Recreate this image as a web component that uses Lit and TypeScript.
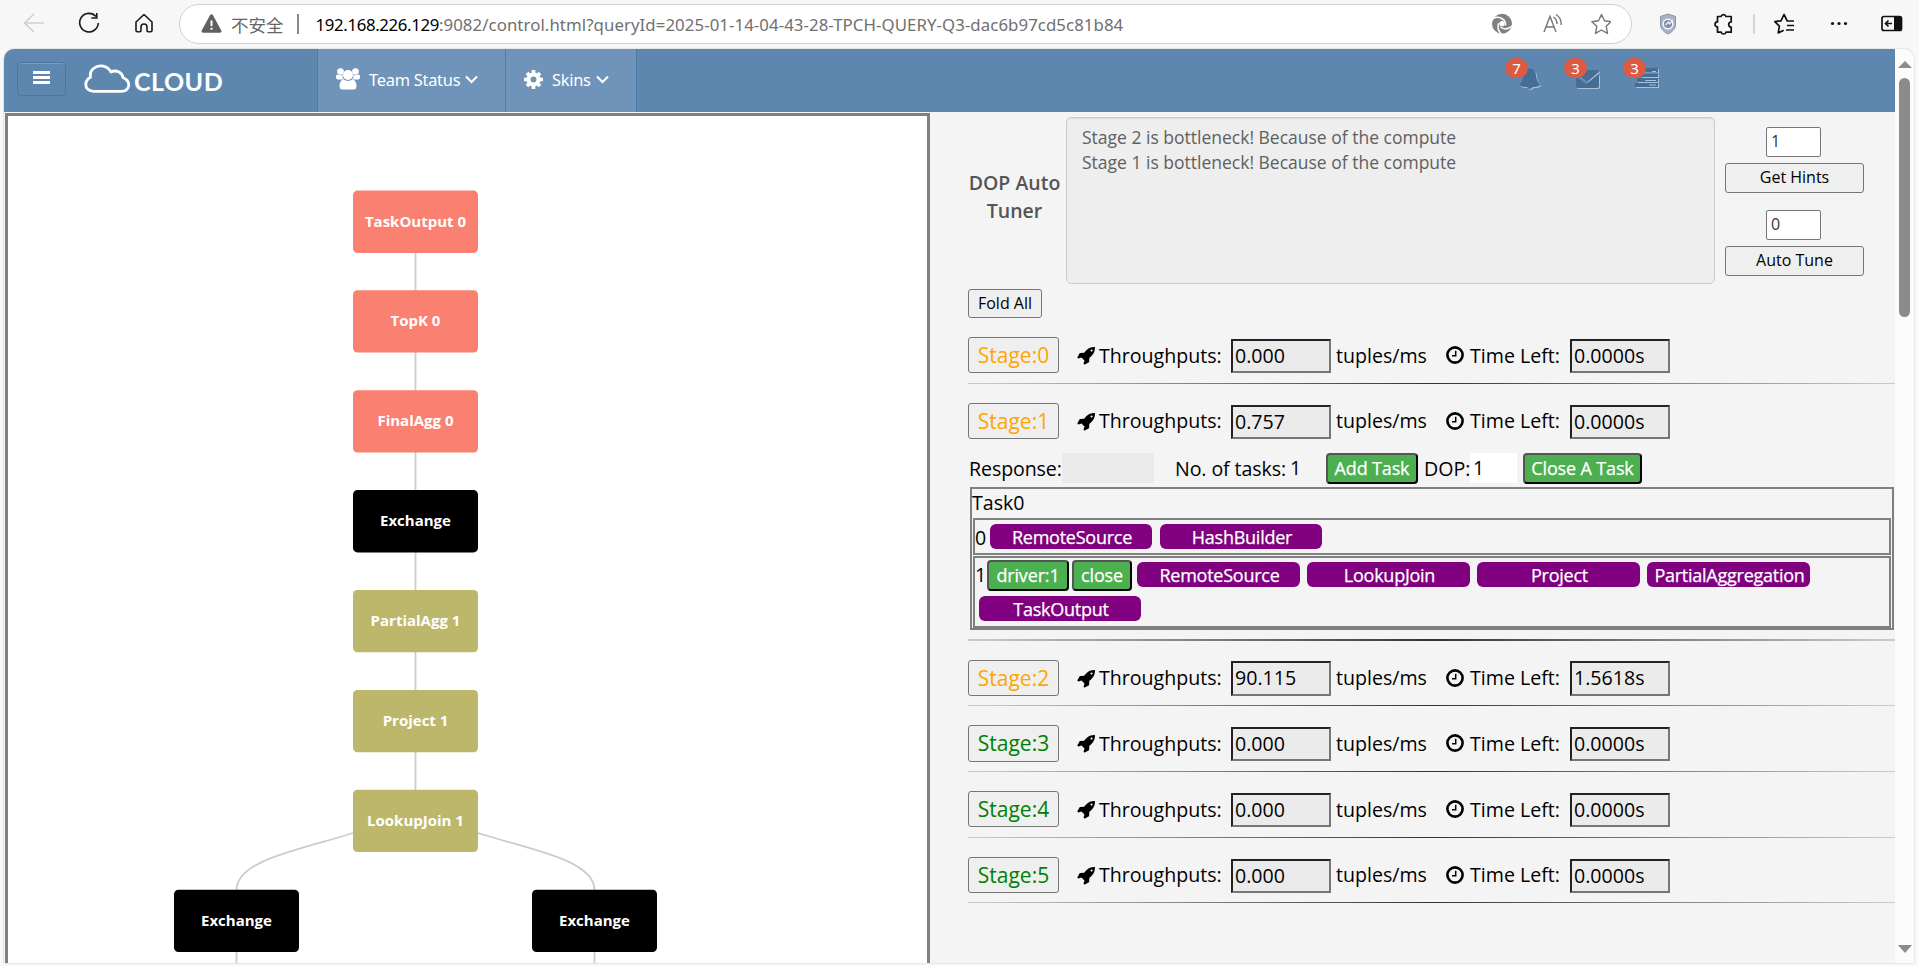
import { LitElement, html, svg, css } from "lit";
import { customElement, property } from "lit/decorators.js";
import { classMap } from "lit/directives/class-map.js";

const rocket = html`<svg class="rocket" viewBox="0 0 1664 1664" width="18" height="18"><path fill="#000" d="M1440 320q0-40-28-68t-68-28-68 28-28 68 28 68 68 28 68-28 28-68zm224-288q0 249-75.500 430.500t-253.500 360.500q-81 80-195 176l-20 379q-2 16-16 26l-384 224q-7 4-16 4-12 0-23-9l-64-64q-13-14-8-32l85-276-281-281-276 85q-3 1-9 1-14 0-23-9l-64-64q-17-19-5-39l224-384q10-14 26-16l379-20q96-114 176-195 188-187 358-258t431-71q14 0 24 9.500t10 22.500z"/></svg>`;
const clock = html`<svg class="clock" viewBox="0 0 18 18" width="18" height="18"><circle cx="9" cy="9" r="7.600" fill="none" stroke="#000" stroke-width="2.600"/><path d="M9.700 4.800V9.700H6" fill="none" stroke="#000" stroke-width="1.500"/></svg>`;

@customElement("browser-bar")
class BrowserBar extends LitElement {
  static styles = css`
    :host { display: flex; height: 49px; background: #f7f7f7; font-family: "Noto Sans", "Open Sans", sans-serif; align-items: flex-start; }
    svg { display: block; flex: none; }
    .nav { display: flex; width: 179px; height: 47px; flex: none; }
    .omni { box-sizing: border-box; width: 1453px; height: 40px; margin-top: 4px; border: 1px solid #d0d0d0; border-radius: 20px; background: #fff; display: flex; align-items: center; font-size: 17px; color: #707070; white-space: pre; flex: none; }
    .warn { margin: 0 0 1px 21px; }
    .unsafe { font-family: "Noto Sans CJK SC", sans-serif; font-size: 17.5px; font-weight: 400; margin-left: 9px; color: #666; width: 54px; }
    .sep { width: 1.5px; height: 20px; background: #8a8a8a; margin-left: 12px; }
    .url { margin-left: 17px; width: 1165px; font-size: 16.800px; letter-spacing: 0.08px; }
    .host { color: #000; letter-spacing: -0.35px; }
    .tools { width: 287px; height: 47px; }
  `;
  render() {
    return html`
      <svg class="nav" viewBox="0 0 179 47" fill="none" stroke-width="1.600">
        <path stroke="#cfcfcf" d="M44 23H25M34 14l-9.500 9 9.500 9"/>
        <path stroke="#1a1a1a" d="M96 16.500A9.300 9.300 0 1 0 98.300 23M96.800 13v5h-5.500"/>
        <path stroke="#1a1a1a" stroke-linejoin="round" d="M136 22l8-7.500 8 7.500v8.500a1.200 1.200 0 0 1-1.200 1.200h-2.600a1.200 1.200 0 0 1-1.200-1.200V27a3 3 0 0 0-6 0v3.500a1.200 1.200 0 0 1-1.200 1.200h-2.600a1.200 1.200 0 0 1-1.200-1.200z"/>
      </svg>
      <div class="omni">
        <svg class="warn" width="21" height="19" viewBox="0 0 21 19"><path fill="#606060" d="M9 1.200a1.700 1.700 0 0 1 3 0l8.300 15.300a1.600 1.600 0 0 1-1.400 2.300H2.100a1.600 1.600 0 0 1-1.400-2.300z"/><path stroke="#fff" stroke-width="2" d="M10.500 6.500v5.600M10.500 13.700v2"/></svg>
        <span class="unsafe">不安全</span><span class="sep"></span>
        <span class="url"><span class="host">192.168.226.129</span>:9082/control.html?queryId=2025-01-14-04-43-28-TPCH-QUERY-Q3-dac6b97cd5c81b84</span>
        <svg width="130" height="38" viewBox="1481 5 130 38" fill="none" stroke="#757575" stroke-width="1.400">
          <g stroke="none"><circle cx="1502" cy="23.700" r="10" fill="#808080"/><circle cx="1502" cy="23.700" r="2.600" fill="#fff"/></g>
          <path stroke="#fff" stroke-width="1.500" d="M1490.500 22q3.500-6 9-4.500 6.500 2 6 8M1498.700 23q-2.500 7 3.500 11.500M1500.500 27q5.500 4.500 12.500-1.500"/>
          <path d="M1544 32l6-15.500 6 15.500M1546 27h8M1553.500 17q3.500 2.500 3.500 7M1556 14.500q5.500 3.500 5.200 10.500"/>
          <path stroke-linejoin="round" d="M1601.500 14.500l3 6.300 6.600.9-4.900 4.600 1.300 7.100-6-3.400-6 3.400 1.300-7.100-4.900-4.600 6.600-.9z"/>
        </svg>
      </div>
      <svg class="tools" viewBox="1632 0 287 47" fill="none" stroke="#111" stroke-width="1.700">
        <path fill="#a9b3c6" stroke="#8793ab" stroke-width="1" d="M1668 14l7.500 2.500v9q-1 5.500-7.500 8.500-6.500-3-7.500-8.500v-9z"/>
        <circle cx="1668" cy="24" r="4.800" stroke="#f2f5fa" stroke-width="1.500" fill="#7f8ca8"/><path stroke="#f2f5fa" stroke-width="1.200" d="M1665.500 25l3-3 1 2 3.500-4"/>
        <path stroke-linejoin="round" d="M1717.500 16.500h3.500a2.600 2.600 0 0 1 5 0h5.200v5.500a2.500 2.500 0 1 0 0 5v5.200h-5.200a2.500 2.500 0 0 1-4.800 0h-3.700v-5.300a2.500 2.500 0 1 1 0-5z"/>
        <path stroke="#c8c8c8" stroke-width="1.500" d="M1754 14v20"/>
        <path stroke-linejoin="round" d="M1787 20.500l-3-6-3 6.300-6.200.9 4.600 4.500-1.200 6.700 5.500-2.700M1786.500 21h7.500M1787 25.500h7M1786 30h8"/>
        <g fill="#111" stroke="none"><circle cx="1832.500" cy="23.500" r="1.600"/><circle cx="1839" cy="23.500" r="1.600"/><circle cx="1845.500" cy="23.500" r="1.600"/>
        <path d="M1894 16h5.500q2.500 0 2.500 2.500v10q0 2.500-2.500 2.500h-5.500z"/></g>
        <rect x="1882" y="16.500" width="19.500" height="14" rx="2"/><path d="M1892 23.500h-6.500M1888.500 20.500l-3 3 3 3"/>
      </svg>`;
  }
}

@customElement("site-header")
class SiteHeader extends LitElement {
  static styles = css`
    :host { display: flex; height: 63px; background: #5e87b0; color: #fff; font-family: "Noto Sans", sans-serif; flex: none; }
    .burger { box-sizing: border-box; width: 49px; height: 34px; margin: 13px 0 0 13px; border: 1px solid #4d769f; border-radius: 4px; box-shadow: inset 0 1px 0 #789bbf; display: flex; flex-direction: column; align-items: center; padding-top: 8px; gap: 2px; }
    .burger i { width: 17px; height: 3px; background: #fff; }
    .logo { display: flex; width: 251px; }
    .cloud { margin: 15px 0 0 18px; flex: none; }
    .name { font: 700 25px/1 Lato, sans-serif; margin: 20px 0 0 3px; letter-spacing: 0.5px; }
    .tab { box-sizing: border-box; background: #7094b9; border-left: 1px solid #4f7ba7; display: flex; align-items: center; font-size: 16.400px; white-space: nowrap; }
    .team { width: 188px; padding: 0 0 3px 18px; }
    .skins { width: 132px; padding: 0 0 3px 18px; border-right: 1px solid #4f7ba7; }
    .tab span { margin-left: 9px; letter-spacing: -0.25px; padding-top: 1px; }
    .chev { margin-left: 5px; }
    .alerts { display: flex; margin-left: 868px; padding-top: 11px; }
    .alert { width: 59px; height: 44px; position: relative; }
    .alert svg { position: absolute; left: 12px; top: 7px; overflow: visible; filter: drop-shadow(1px 1px 0 #a9c3dc); }
    .alert:first-child svg { left: 14px; }
    .badge { position: absolute; left: 0; top: -2px; width: 23px; height: 20px; border-radius: 10px; background: #dd5a43; font-size: 15px; line-height: 21px; text-align: center; }
  `;
  render() {
    const chev = html`<svg class="chev" width="13" height="9" viewBox="0 0 13 9"><path d="M1 1.500l5.500 5.500 5.500-5.500" fill="none" stroke="#fff" stroke-width="2"/></svg>`;
    const alerts: [string, unknown][] = [
      ["7", svg`<path fill="#466d94" d="M0 17q4-4 4.500-10t6-6.500q6 .5 6.500 6.500t4 10q-2 2-7 2-3.500 4-6 0-6 0-8-2z"/>`],
      ["3", svg`<path fill="#466d94" d="M0 4q0-2 2-2h19q2 0 2 2l-12 10-11-9z"/><path fill="#466d94" d="M0 8l10 8 13-10v12q0 2-2 2h-19q-2 0-2-2z"/>`],
      ["3", svg`<path fill="#466d94" d="M8 0h15v4.500h-15zM6 5.500h17v3.500h-17zM2 10h21v4h-21zM0 15h23v4h-23z"/><path stroke="#a9c3dc" d="M17 3.500h4M10 12.500h11M14 17h7"/>`],
    ];
    return html`
      <div class="burger"><i></i><i></i><i></i></div>
      <div class="logo">
        <svg class="cloud" width="47" height="30" viewBox="0 0 47 30"><path fill="none" stroke="#fff" stroke-width="2.800" stroke-linejoin="round" d="M9.500 27.300Q1.800 26.500 1.800 20.500 2 15.500 6.500 13.300 5.500 7.500 9.500 4.500A11.500 11.500 0 0 1 27 8Q31 6 35 8 38.500 10 39 13.500 45.500 16.500 44.600 22 43.500 27.300 37.500 27.300Z"/></svg>
        <span class="name">CLOUD</span>
      </div>
      <div class="tab team">
        <svg width="24" height="22" viewBox="0 0 24 22" fill="#fff"><circle cx="4.500" cy="3.500" r="3.300"/><circle cx="19.500" cy="3.500" r="3.300"/><circle cx="12" cy="7" r="5"/><path d="M0 8q0-1.500 1.500-1.500 3.500 1.500 5 0Q6 10 8 11.500H2Q0 11.500 0 9.500zM24 8q0-1.500-1.500-1.500-3.500 1.500-5 0Q18 10 16 11.500h6q2 0 2-2zM3.500 18q0-5.500 4-6.500 4.500 2.800 9 0 4 1 4 6.500 0 3.500-3 3.500h-11q-3 0-3-3.500z"/></svg>
        <span>Team Status</span>${chev}
      </div>
      <div class="tab skins">
        <svg width="19" height="19" viewBox="0 -128 1536 1536" fill="none"><circle cx="768" cy="640" r="405" stroke="#fff" stroke-width="330"/><path stroke="#fff" stroke-width="300" d="M768 200V-128M768 1080V1408M328 640H0M1208 640H1536M457 329L240 112M1079 951L1296 1168M457 951L240 1168M1079 329L1296 112"/></svg>
        <span>Skins</span>${chev}
      </div>
      <div class="alerts">
        ${alerts.map(([n, icon]) => html`<div class="alert"><svg width="24" height="22" viewBox="0 -1 24 22">${icon}</svg><div class="badge">${n}</div></div>`)}
      </div>`;
  }
}

@customElement("plan-graph")
class PlanGraph extends LitElement {
  static styles = css`
    :host { display: block; box-sizing: border-box; width: 925px; height: 850px; margin: 1px 0 0 1px; border: 3px solid #808080; border-bottom: 0; background: #fff; overflow: hidden; }
    svg { display: block; }
    .label { font: 700 15px "Open Sans", sans-serif; fill: #fff; text-anchor: middle; }
    .edge { fill: none; stroke: #ccc; stroke-width: 1.800px; }
  `;
  render() {
    const S = "#fa8072", K = "#bdb76b", B = "#000";
    const nodes: [string, number, number, string][] = [
      ["TaskOutput 0", 415.5, 190.6, S], ["TopK 0", 415.5, 290.300, S], ["FinalAgg 0", 415.5, 390.200, S],
      ["Exchange", 415.5, 490.100, B], ["PartialAgg 1", 415.5, 590, K], ["Project 1", 415.5, 689.900, K],
      ["LookupJoin 1", 415.5, 789.800, K], ["Exchange", 236.5, 889.700, B], ["Exchange", 594.5, 889.700, B],
    ];
    return html`<svg width="919" height="847" viewBox="8 116 919 847">
      <path class="edge" d="M415.500 220V800M236.500 940V970M594.500 940V970M353 833C300 850 236.500 860 236.500 890M478 833C531 850 594.500 860 594.500 890"/>
      ${nodes.map(([t, x, y, c]) => svg`<rect x=${x - 62.5} y=${y} width="125" height="62.300" rx="4.500" fill=${c}/><text class="label" x=${x} y=${y + 36.1}>${t}</text>`)}
    </svg>`;
  }
}

@customElement("stage-row")
class StageRow extends LitElement {
  @property({ type: Number }) index = 0;
  @property() rate = "0.000";
  @property() left = "0.0000s";
  @property({ type: Boolean }) done = false;
  @property({ type: Boolean }) open = false;
  static styles = css`
    :host { display: block; font: 19.600px/28px "Open Sans", sans-serif; color: #000; }
    .line { display: flex; align-items: center; height: 36.330px; white-space: nowrap; }
    .line span { padding-top: 1px; }
    .stage { box-sizing: border-box; width: 91px; height: 36.330px; border: 1px solid #767676; border-radius: 3px; background: #efefef; font: 21px/34px "Open Sans", sans-serif; text-align: center; color: orange; padding: 0; flex: none; }
    .stage.done { color: green; }
    .rocket { margin: 2px 4px 0 18px; flex: none; }
    .clock { margin: 0 6px 0 0; flex: none; }
    .tp { width: 132px; }
    .unit { width: 110px; margin-left: 5px; }
    .tl { width: 100px; }
    .box { box-sizing: border-box; width: 100px; height: 34.300px; margin-top: 1.500px; border: 2px solid; border-color: #222 #767676 #767676 #222; background: #ebebeb; padding-left: 2px; line-height: 30px; }
    .rule { height: 1px; margin: 9.330px 0 19.100px; background: linear-gradient(90deg, #ccc, #333 50%, #ccc); }
    .rule.thick { height: 2px; margin: 9px 0 18.900px; }
    .task { display: flex; height: 31px; margin: 13.600px 0 3px 1px; white-space: nowrap; line-height: 32px; }
    .green { box-sizing: border-box; height: 31px; border: 2px solid; border-color: #555 #000 #000 #555; border-radius: 4px; background: #4caf50; color: #fff; font: 18px/26px "Open Sans", sans-serif; letter-spacing: -0.15px; text-align: center; flex: none; -webkit-text-stroke: 0.25px #fff; }
    .resp { width: 93px; letter-spacing: -0.1px; }
    .blank { width: 92px; height: 30px; background: #ebebeb; }
    .num { width: 115px; margin-left: 21px; letter-spacing: -0.1px; }
    .one { width: 36px; line-height: 30px; }
    .dop { width: 46px; margin-left: 6px; }
    .white { box-sizing: border-box; width: 47px; height: 30px; background: #fff; padding-left: 3px; line-height: 30px; margin-right: 6px; }
    .tasks { box-sizing: border-box; margin: 0 1px 0 2px; height: 143px; border: 2px solid #808080; }
    .title { height: 29px; line-height: 28px; }
    .pipe { box-sizing: border-box; margin: 0 1px 1px; border: 2px solid #808080; display: flex; flex-wrap: wrap; align-content: flex-start; }
    .p0 { height: 37px; padding: 4px 0 0 0; column-gap: 8px; }
    .p1 { height: 72px; padding: 2px 0 0 1px; }
    .no { width: 13px; line-height: 28px; margin-right: -6px; }
    .p1 .no { width: 11px; margin: 2px 0 0; line-height: 25px; text-indent: -1px; }
    .chip { box-sizing: border-box; width: 162px; height: 25px; border-radius: 6px; background: purple; color: #fff; font-size: 18px; line-height: 27px; text-align: center; letter-spacing: -0.25px; padding-left: 2px; -webkit-text-stroke: 0.25px #fff; }
    .p1 .chip { width: 163px; margin: 2px 7px 0 0; }
    .p1 .chip.last { width: 162px; margin: 5px 0 0 3px; }
  `;
  render() {
    return html`
      <div class="line">
        <button class=${classMap({ stage: true, done: this.done })}>Stage:${this.index}</button>
        ${rocket}<span class="tp">Throughputs:</span><div class="box">${this.rate}</div><span class="unit">tuples/ms</span>
        ${clock}<span class="tl">Time Left:</span><div class="box">${this.left}</div>
      </div>
      ${this.open ? html`
        <div class="task">
          <span class="resp">Response:</span><div class="blank"></div><span class="num">No. of tasks:</span><span class="one">1</span>
          <div class="green" style="width:92px">Add Task</div><span class="dop">DOP:</span><div class="white">1</div><div class="green" style="width:119px">Close A Task</div>
        </div>
        <div class="tasks">
          <div class="title">Task0</div>
          <div class="pipe p0"><span class="no">0</span><div class="chip">RemoteSource</div><div class="chip">HashBuilder</div></div>
          <div class="pipe p1"><span class="no">1</span><div class="green" style="width:82px;margin-right:3px">driver:1</div><div class="green" style="width:60px;margin-right:5px">close</div>
            <div class="chip">RemoteSource</div><div class="chip">LookupJoin</div><div class="chip">Project</div><div class="chip">PartialAggregation</div><div class="chip last">TaskOutput</div></div>
        </div>` : null}
      <div class=${classMap({ rule: true, thick: this.open })}></div>`;
  }
}

@customElement("app-root")
class AppRoot extends LitElement {
  static styles = css`
    :host { display: block; width: 1919px; height: 966px; overflow: hidden; background: #f9f9f9; font-family: "Open Sans", sans-serif; }
    .frame { display: flex; margin-left: 4px; width: 1910px; height: 914px; border-radius: 10px 10px 0 0; overflow: hidden; box-shadow: 0 0 2px #bbb; background: #fcfcfc; }
    .page { width: 1891px; background: #f4f4f4; display: flex; flex-direction: column; flex: none; }
    .body { display: flex; flex: 1; }
    .control { width: 927px; margin-left: 38px; }
    .tuner { display: flex; height: 172px; padding-top: 5px; box-sizing: border-box; }
    .name { width: 93px; font-size: 19.500px; font-weight: 600; line-height: 28px; color: #555; text-align: center; margin: 52px 5px 0 0; white-space: nowrap; }
    .log { box-sizing: border-box; width: 649px; height: 167px; border: 1px solid #ccc; border-radius: 5px; background: #eee; color: #606060; font-size: 17.500px; line-height: 25px; padding: 7px 15px; box-shadow: inset 0 1px 1px rgba(0,0,0,.08); white-space: pre-line; }
    .side { width: 139px; margin: 10px 0 0 10px; display: flex; flex-direction: column; align-items: center; font-size: 16px; }
    .in { box-sizing: border-box; width: 55px; height: 30px; margin-right: 2px; border: 1px solid #767676; border-radius: 2px; background: #fff; color: #333; padding-left: 4px; line-height: 27px; flex: none; }
    .btn { box-sizing: border-box; height: 30px; border: 1px solid #767676; border-radius: 3px; background: #efefef; color: #000; font: 16px/26px "Open Sans", sans-serif; padding: 0 0 2px; text-align: center; flex: none; }
    .side .btn { width: 139px; margin: 6px 0 17px; }
    .fold { width: 74px; height: 29px; display: block; margin: 5px 0 19px; }
    .scroll { display: flex; flex-direction: column; align-items: center; width: 19px; padding: 12px 0 10px; box-sizing: border-box; }
    .thumb { width: 11px; height: 239px; border-radius: 6px; background: #8b8b8b; margin-top: 10px; }
    .down { margin-top: auto; }
  `;
  render() {
    return html`
      <browser-bar></browser-bar>
      <div class="frame">
        <div class="page">
          <site-header></site-header>
          <div class="body">
            <plan-graph></plan-graph>
            <div class="control">
              <div class="tuner">
                <div class="name">DOP Auto<br>Tuner</div>
                <div class="log">Stage 2 is bottleneck! Because of the compute<br>Stage 1 is bottleneck! Because of the compute</div>
                <div class="side"><div class="in">1</div><button class="btn">Get Hints</button><div class="in">0</div><button class="btn">Auto Tune</button></div>
              </div>
              <button class="btn fold">Fold All</button>
              <stage-row .index=${0}></stage-row>
              <stage-row .index=${1} rate="0.757" open></stage-row>
              <stage-row .index=${2} rate="90.115" left="1.5618s"></stage-row>
              <stage-row .index=${3} done></stage-row>
              <stage-row .index=${4} done></stage-row>
              <stage-row .index=${5} done></stage-row>
            </div>
          </div>
        </div>
        <div class="scroll">
          <svg width="14" height="7" viewBox="0 0 14 7"><path fill="#8b8b8b" d="M7 0l7 7H0z"/></svg>
          <div class="thumb"></div>
          <svg class="down" width="14" height="8" viewBox="0 0 14 8"><path fill="#8b8b8b" d="M0 0h14l-7 8z"/></svg>
        </div>
      </div>`;
  }
}
